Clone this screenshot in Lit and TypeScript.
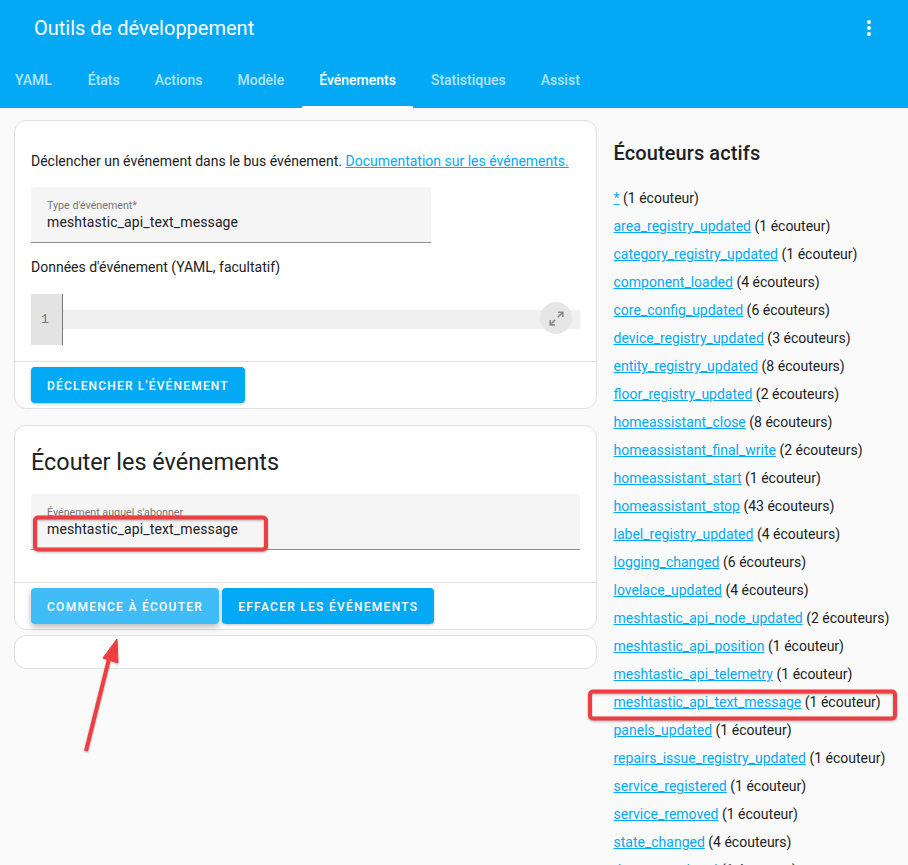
import { LitElement, html, css, svg } from "lit";
import { customElement } from "lit/decorators.js";

const listeners: [string, number][] = [
  ["*", 1], ["area_registry_updated", 1], ["category_registry_updated", 1], ["component_loaded", 4],
  ["core_config_updated", 6], ["device_registry_updated", 3], ["entity_registry_updated", 8],
  ["floor_registry_updated", 2], ["homeassistant_close", 8], ["homeassistant_final_write", 2],
  ["homeassistant_start", 1], ["homeassistant_stop", 43], ["label_registry_updated", 4],
  ["logging_changed", 6], ["lovelace_updated", 4], ["meshtastic_api_node_updated", 2],
  ["meshtastic_api_position", 1], ["meshtastic_api_telemetry", 1], ["meshtastic_api_text_message", 1],
  ["panels_updated", 1], ["repairs_issue_registry_updated", 1], ["service_registered", 1],
  ["service_removed", 1], ["state_changed", 4], ["themes_updated", 1],
];
const tabs = ["YAML", "États", "Actions", "Modèle", "Événements", "Statistiques", "Assist"];

@customElement("app-root")
export class AppRoot extends LitElement {
  static styles = css`
    :host { display: block; height: 865px; overflow: hidden; position: relative; background: #fafafa;
      font-family: Roboto, sans-serif; color: #212121; font-size: 14px; }
    header { background: #03a9f4; height: 108px; color: #fff; display: flex; flex-direction: column; }
    .top { height: 56px; flex: none; display: flex; align-items: center; justify-content: space-between; padding: 0 27px 0 34px; }
    .title { font-size: 20px; }
    .dots { width: 24px; height: 24px; display: block; fill: #fff; }
    nav { height: 52px; display: flex; }
    .tab { padding: 0 17.5px 2px; display: flex; align-items: center; font-size: 14px; font-weight: 500;
      color: rgba(255,255,255,.7); box-sizing: border-box; height: 52px; border-bottom: 2px solid transparent; }
    .tab:first-child { padding-left: 15px; padding-right: 18.4px; }
    .tab.on { color: #fff; border-bottom-color: #fff; }
    main { display: flex; align-items: flex-start; padding: 12px 0 0 14px; }
    .left { width: 583px; flex: none; display: flex; flex-direction: column; }
    .card { background: #fff; border: 1px solid #e0e0e0; border-radius: 12px; box-sizing: border-box; }
    .c1 { margin-bottom: 16px; }
    .c2 { margin-bottom: 5px; }
    .desc { padding: 30px 16px 0; line-height: 20px; height: 20px; }
    a { color: #03a9f4; text-decoration: underline; }
    .field { background: #f5f5f5; border-bottom: 1px solid #8c8c8c; border-radius: 4px 4px 0 0;
      box-sizing: border-box; padding: 13px 16px 0; }
    .lab { font-size: 10.7px; line-height: 12px; color: #757575; }
    .val { font-size: 14px; line-height: 20px; margin-top: 0; letter-spacing: .125px; }
    .f1 { width: 400px; height: 56px; margin: 16px 0 0 16px; }
    .data { padding: 14px 16px 0; line-height: 20px; }
    .editor { margin: 17px 16px 0; height: 51px; display: flex; position: relative; }
    .gutter { width: 32px; background: #e3e3e3; box-sizing: border-box; border-right: 1px solid #757575;
      font: 13px "Liberation Mono", monospace; color: #757575; display: flex; align-items: center; padding-left: 10px; }
    .line { flex: 1; height: 19px; margin-top: 16px; background: #f0f0f0; }
    .expand { position: absolute; right: 8px; top: 8px; width: 32px; height: 32px; border-radius: 50%;
      background: #e6e6e6; display: flex; align-items: center; justify-content: center; }
    .expand svg { width: 19px; height: 19px; fill: #8a8a8a; }
    .actions { border-top: 1px solid #e0e0e0; margin-top: 16px; padding: 5px 16px 0; display: flex; gap: 3px; height: 41px; }
    button { all: unset; box-sizing: border-box; height: 36px; padding: 1px 16px 0; background: #03a9f4; color: #fff;
      border-radius: 4px; font: 500 12px Roboto, sans-serif; letter-spacing: 1.18px; display: flex; align-items: center;
      box-shadow: 0 1px 3px rgba(0,0,0,.25); }
    .c2 button { letter-spacing: 1.27px; }
    button.hover { background: #40bcf7; box-shadow: 0 3px 6px rgba(0,0,0,.28); }
    h2 { font-size: 23.4px; font-weight: 400; margin: 0; line-height: 32px; padding: 20px 16px 0; }
    .f2 { height: 56px; margin: 16px 16px 0; padding-top: 13px; }
    .f2 .lab { line-height: 11px; }
    .f2 .val { margin-top: 1px; }
    .c2 .actions { margin-top: 32px; }
    .c3 { height: 34px; }
    aside { margin-left: 16.5px; flex: 1; padding-top: 21px; }
    aside h3 { font-size: 20px; font-weight: 500; margin: 0 0 19px; line-height: 24px; letter-spacing: .1px; }
    .row { height: 28px; line-height: 28px; white-space: nowrap; }
    .marks { position: absolute; left: 0; top: 0; width: 908px; height: 865px; pointer-events: none;
      filter: drop-shadow(0 1px 1px rgba(0,0,0,.3)); }
  `;

  private marks() {
    return svg`
      <rect x="35" y="517.5" width="231" height="32" rx="3" fill="none" stroke="#ee3e41" stroke-width="4"/>
      <rect x="590" y="691.5" width="305" height="27" rx="3" fill="none" stroke="#ee3e41" stroke-width="4"/>
      <path d="M86 751 L110 655" fill="none" stroke="#ee3e41" stroke-width="4"/>
      <path d="M117 639 L103 658 L118 663 Z" fill="#ee3e41" stroke="#ee3e41"/>
    `;
  }

  render() {
    return html`
      <header>
        <div class="top">
          <div class="title">Outils de développement</div>
          <svg class="dots" viewBox="0 0 24 24"><path d="M12 16a2 2 0 1 1 0 4 2 2 0 0 1 0-4Zm0-6a2 2 0 1 1 0 4 2 2 0 0 1 0-4Zm0-6a2 2 0 1 1 0 4 2 2 0 0 1 0-4Z"/></svg>
        </div>
        <nav>${tabs.map((t) => html`<div class="tab ${t === "Événements" ? "on" : ""}">${t}</div>`)}</nav>
      </header>
      <main>
        <div class="left">
          <section class="card c1">
            <div class="desc">Déclencher un événement dans le bus événement. <a>Documentation sur les événements.</a></div>
            <div class="field f1"><div class="lab">Type d'événement*</div><div class="val">meshtastic_api_text_message</div></div>
            <div class="data">Données d'événement (YAML, facultatif)</div>
            <div class="editor">
              <div class="gutter">1</div><div class="line"></div>
              <div class="expand"><svg viewBox="0 0 24 24"><path d="M10 21v-2H6.41l4.5-4.5-1.41-1.41-4.5 4.5V14H3v7h7Zm4.5-10.09 4.5-4.5V10h2V3h-7v2h3.59l-4.5 4.5 1.41 1.41Z"/></svg></div>
            </div>
            <div class="actions"><button>DÉCLENCHER L'ÉVÉNEMENT</button></div>
          </section>
          <section class="card c2">
            <h2>Écouter les événements</h2>
            <div class="field f2"><div class="lab">Événement auquel s'abonner</div><div class="val">meshtastic_api_text_message</div></div>
            <div class="actions"><button class="hover">COMMENCE À ÉCOUTER</button><button>EFFACER LES ÉVÉNEMENTS</button></div>
          </section>
          <section class="card c3"></section>
        </div>
        <aside>
          <h3>Écouteurs actifs</h3>
          ${listeners.map(([n, c]) => html`<div class="row"><a>${n}</a> (${c} ${c > 1 ? "écouteurs" : "écouteur"})</div>`)}
        </aside>
      </main>
      <svg class="marks" viewBox="0 0 908 865">${this.marks()}</svg>
    `;
  }
}
